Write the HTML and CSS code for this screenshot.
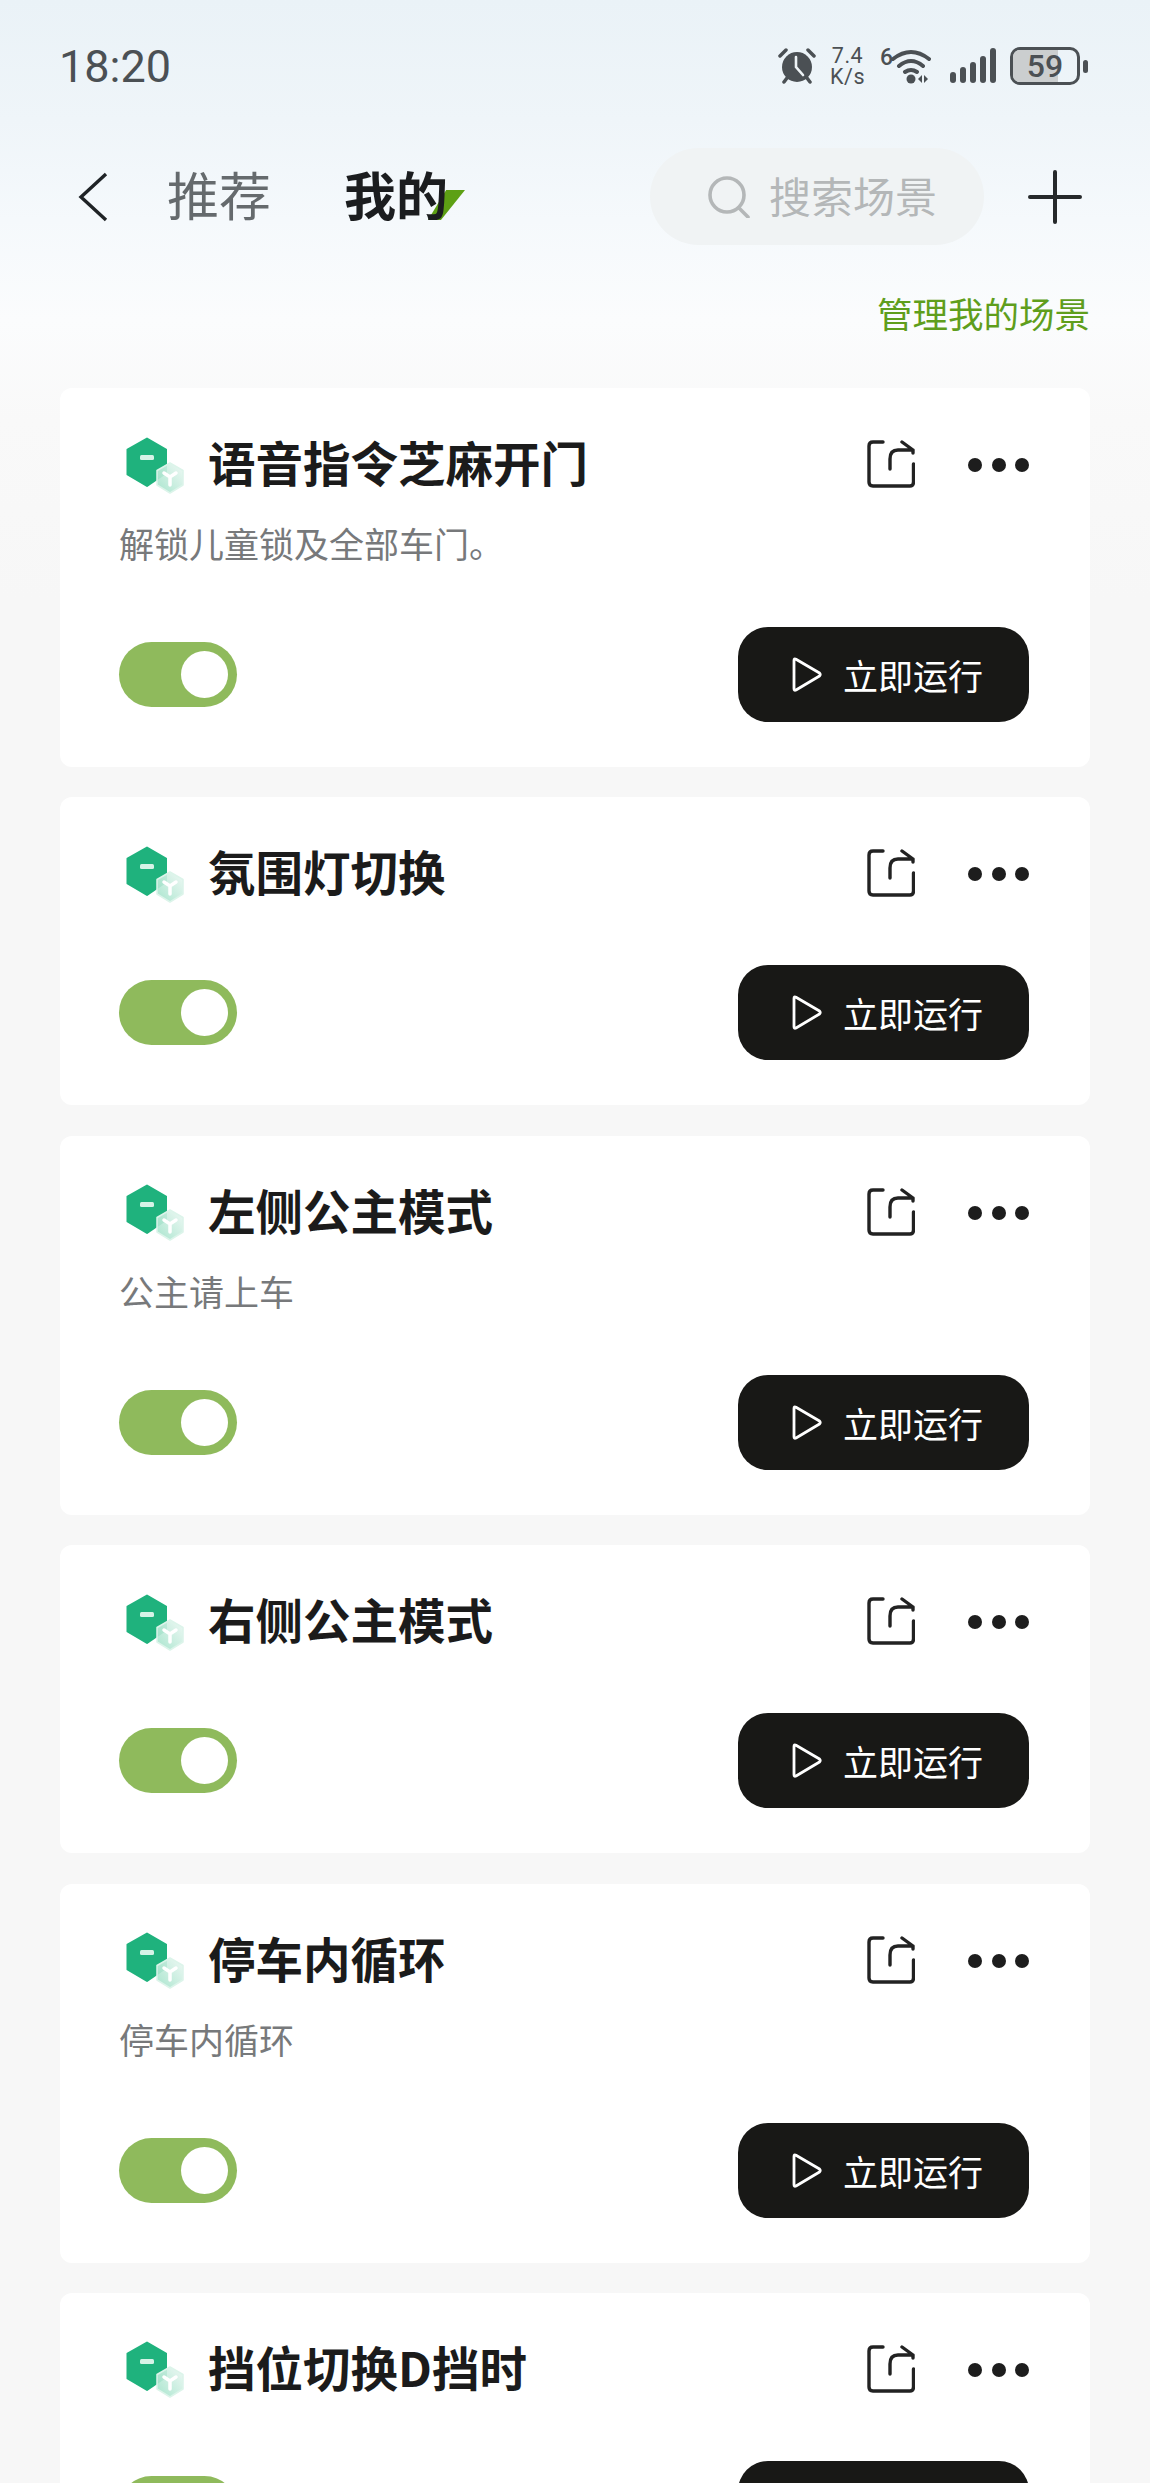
FILE: index.html
```html
<!DOCTYPE html>
<html lang="zh-CN">
<head>
  <meta charset="UTF-8" />
  <meta name="viewport" content="width=device-width, initial-scale=1.0"/>
  <title>我的场景</title>
  <link rel="stylesheet" href="styles.css">
</head>
<body>
  <svg class="defs" width="0" height="0">
    <defs>
      <linearGradient id="glass" x1="0" y1="1" x2="1" y2="0">
        <stop offset="0" stop-color="#9fe2c8"/>
        <stop offset="1" stop-color="#eef8f4"/>
      </linearGradient>
      <symbol id="scene" viewBox="0 0 70 60">
        <path d="M28 1.500 47 12.500V36L28 49 8.500 37.500V12.500Z" fill="#1fb27d" stroke="#1fb27d" stroke-width="2" stroke-linejoin="round"/>
        <rect x="21" y="18" width="14" height="5" rx="1.500" fill="#d6f3e7"/>
        <path d="M51 26 64 33.500V48L51 56 38 48V33.500Z" fill="url(#glass)" fill-opacity="0.9" stroke="#dcf4ea" stroke-width="1.500" stroke-linejoin="round"/>
        <path d="M45 36 51 40 57 36M51 40V48" fill="none" stroke="#fff" stroke-width="3.500" stroke-linecap="round"/>
      </symbol>
      <symbol id="share" viewBox="0 0 48 48">
        <path d="M16 2H6Q2 2 2 6V42Q2 46 6 46H43Q46.500 46 46.500 42V24" fill="none" stroke="#222" stroke-width="3.400" stroke-linecap="round"/>
        <path d="M23 29V19Q23 10 31 10H46V13M46 10 35 2" fill="none" stroke="#222" stroke-width="3.400" stroke-linecap="round" stroke-linejoin="round"/>
      </symbol>
      <symbol id="play" viewBox="0 0 30 35">
        <path d="M2 3.500Q2 1 4 2.200L27.500 16Q29 17.500 27.500 19L4 33Q2 34 2 31.500Z" fill="none" stroke="#fff" stroke-width="2.800" stroke-linejoin="round"/>
      </symbol>
    </defs>
  </svg>

  <div class="page">
    <div class="status-bar">
      <span class="time">18:20</span>
      <div class="status-icons">
        <svg class="alarm" width="38" height="36" viewBox="0 0 38 36">
          <circle cx="19" cy="19" r="15" fill="#4b5054"/>
          <path d="M18 9V19L25 27" fill="none" stroke="#eef3f6" stroke-width="2.600" stroke-linecap="round"/>
          <path d="M2 8 8 2M36 8 30 2M6 34 9 30M32 34 29 30" fill="none" stroke="#4b5054" stroke-width="3.500" stroke-linecap="round"/>
        </svg>
        <div class="speed"><span>7.4</span><span>K/s</span></div>
        <div class="wifi">
          <span class="wifi-six">6</span>
          <svg width="40" height="36" viewBox="0 0 40 36">
            <path d="M2 11Q20-3 38 11M8 18Q20 8 32 18M14 24Q20 20 26 24" fill="none" stroke="#4b5054" stroke-width="4" stroke-linecap="round"/>
            <circle cx="20" cy="31" r="4.500" fill="#4b5054"/>
            <path d="M27 31 31 27V35ZM37 31 33 27V35Z" fill="#4b5054"/>
          </svg>
        </div>
        <svg class="signal" width="46" height="36" viewBox="0 0 46 36">
          <rect x="0" y="24" width="6" height="11" rx="3" fill="#4b5054"/>
          <rect x="10" y="19" width="6" height="16" rx="3" fill="#4b5054"/>
          <rect x="20" y="14" width="6" height="21" rx="3" fill="#4b5054"/>
          <rect x="30" y="8" width="6" height="27" rx="3" fill="#4b5054"/>
          <rect x="40" y="0" width="6" height="35" rx="3" fill="#4b5054"/>
        </svg>
        <div class="battery">
          <div class="battery-body"><span class="battery-level"></span><span class="battery-num">59</span></div>
          <span class="battery-nub"></span>
        </div>
      </div>
    </div>

    <div class="nav">
      <svg class="back" width="30" height="50" viewBox="0 0 30 50">
        <path d="M28 2 3 25 28 48" fill="none" stroke="#1f2326" stroke-width="3.400"/>
      </svg>
      <span class="tab">推荐</span>
      <span class="tab tab-active">我的<i class="tab-mark"></i></span>
      <div class="search">
        <svg width="44" height="42" viewBox="0 0 44 42">
          <circle cx="20" cy="19" r="17" fill="none" stroke="#b4b7b8" stroke-width="3.600"/>
          <path d="M32 32 41 41" stroke="#b4b7b8" stroke-width="3.600" stroke-linecap="round"/>
        </svg>
        <span class="search-text">搜索场景</span>
      </div>
      <svg class="plus" width="54" height="54" viewBox="0 0 54 54">
        <path d="M27 2V52M2 27H52" stroke="#26292b" stroke-width="4" stroke-linecap="round"/>
      </svg>
    </div>

    <div class="manage"><a>管理我的场景</a></div>

    <div class="card-list">
      <div class="card">
        <div class="card-head">
          <svg class="scene" width="70" height="60"><use href="#scene"/></svg>
          <h3>语音指令芝麻开门</h3>
          <svg class="share" width="48" height="48"><use href="#share"/></svg>
          <div class="dots"><i></i><i></i><i></i></div>
        </div>
        <p class="desc">解锁儿童锁及全部车门。</p>
        <div class="card-foot card-foot-desc">
          <div class="toggle"><i></i></div>
          <button class="run"><svg width="30" height="35"><use href="#play"/></svg>立即运行</button>
        </div>
      </div>

      <div class="card">
        <div class="card-head">
          <svg class="scene" width="70" height="60"><use href="#scene"/></svg>
          <h3>氛围灯切换</h3>
          <svg class="share" width="48" height="48"><use href="#share"/></svg>
          <div class="dots"><i></i><i></i><i></i></div>
        </div>
        <div class="card-foot">
          <div class="toggle"><i></i></div>
          <button class="run"><svg width="30" height="35"><use href="#play"/></svg>立即运行</button>
        </div>
      </div>

      <div class="card">
        <div class="card-head">
          <svg class="scene" width="70" height="60"><use href="#scene"/></svg>
          <h3>左侧公主模式</h3>
          <svg class="share" width="48" height="48"><use href="#share"/></svg>
          <div class="dots"><i></i><i></i><i></i></div>
        </div>
        <p class="desc">公主请上车</p>
        <div class="card-foot card-foot-desc">
          <div class="toggle"><i></i></div>
          <button class="run"><svg width="30" height="35"><use href="#play"/></svg>立即运行</button>
        </div>
      </div>

      <div class="card">
        <div class="card-head">
          <svg class="scene" width="70" height="60"><use href="#scene"/></svg>
          <h3>右侧公主模式</h3>
          <svg class="share" width="48" height="48"><use href="#share"/></svg>
          <div class="dots"><i></i><i></i><i></i></div>
        </div>
        <div class="card-foot">
          <div class="toggle"><i></i></div>
          <button class="run"><svg width="30" height="35"><use href="#play"/></svg>立即运行</button>
        </div>
      </div>

      <div class="card">
        <div class="card-head">
          <svg class="scene" width="70" height="60"><use href="#scene"/></svg>
          <h3>停车内循环</h3>
          <svg class="share" width="48" height="48"><use href="#share"/></svg>
          <div class="dots"><i></i><i></i><i></i></div>
        </div>
        <p class="desc">停车内循环</p>
        <div class="card-foot card-foot-desc">
          <div class="toggle"><i></i></div>
          <button class="run"><svg width="30" height="35"><use href="#play"/></svg>立即运行</button>
        </div>
      </div>

      <div class="card">
        <div class="card-head">
          <svg class="scene" width="70" height="60"><use href="#scene"/></svg>
          <h3>挡位切换D挡时</h3>
          <svg class="share" width="48" height="48"><use href="#share"/></svg>
          <div class="dots"><i></i><i></i><i></i></div>
        </div>
        <div class="card-foot">
          <div class="toggle"><i></i></div>
          <!-- label falls below the fold here -->
          <button class="run"></button>
        </div>
      </div>
    </div>
  </div>
</body>
</html>
```

FILE: styles.css
```css
html, body {
  margin: 0;
  height: 2483px;
  overflow: hidden;
}
body {
  font-family: "Noto Sans CJK SC", "Noto Sans", sans-serif;
  background-color: #f7f7f7;
}
.defs {
  display: block;
  height: 0;
}
.page {
  height: 2483px;
  overflow: hidden;
  background: linear-gradient(180deg, #eaf2f7 0, #eff5f9 120px, #f5f9fc 220px, #fbfcfd 320px, #f9f9f9 420px, #f7f7f7 600px);
}

/* status bar */
.status-bar {
  display: flex;
  justify-content: space-between;
  align-items: center;
  box-sizing: border-box;
  height: 132px;
  padding: 24px 62px 24px 59px;
}
.time {
  font-family: Roboto, sans-serif;
  font-size: 45px;
  color: #4b5054;
}
.status-icons {
  display: flex;
  align-items: center;
  color: #4b5054;
}
.alarm {
  margin-right: -5px;
}
.speed {
  display: flex;
  flex-direction: column;
  align-items: center;
  margin-left: 19px;
  font-family: Roboto, sans-serif;
  font-size: 21.500px;
  line-height: 21.500px;
  letter-spacing: 0.500px;
}
.wifi {
  display: flex;
  align-items: flex-start;
  margin-left: 15px;
}
.wifi-six {
  font-family: Roboto, sans-serif;
  font-weight: 500;
  font-size: 23px;
  line-height: 20px;
  width: 11px;
}
.signal {
  margin-left: 19px;
}
.battery {
  display: flex;
  align-items: center;
  margin-left: 14px;
}
.battery-body {
  position: relative;
  display: flex;
  justify-content: center;
  align-items: center;
  box-sizing: border-box;
  width: 70px;
  height: 38px;
  border: 3px solid #4b5054;
  border-radius: 10px;
  overflow: hidden;
}
.battery-level {
  position: absolute;
  left: 0;
  top: 0;
  bottom: 0;
  width: 70%;
  background-color: #cbcecf;
}
.battery-num {
  position: relative;
  font-family: Roboto, sans-serif;
  font-weight: 500;
  font-size: 32px;
  line-height: 32px;
}
.battery-nub {
  width: 5px;
  height: 13px;
  margin-left: 3px;
  border-radius: 3px;
  background-color: #4b5054;
}

/* nav row */
.nav {
  display: flex;
  align-items: center;
  height: 97px;
  margin-top: 16px;
  padding: 0 68px 0 78px;
}
.back {
  margin-right: 59px;
}
.tab {
  padding-bottom: 5px;
  font-size: 52px;
  line-height: 60px;
  color: #656a6d;
}
.tab-active {
  position: relative;
  isolation: isolate;
  margin-left: 73px;
  font-weight: 700;
  color: #1b1d1f;
}
.tab-mark {
  position: absolute;
  z-index: -1;
  left: 84px;
  top: 26px;
  width: 37px;
  height: 30px;
  background-color: #5da014;
  clip-path: polygon(0 100%, 49% 0, 100% 0, 35% 100%);
}
.search {
  display: flex;
  align-items: center;
  gap: 18px;
  box-sizing: border-box;
  width: 334px;
  height: 97px;
  margin-left: auto;
  padding-left: 57px;
  border-radius: 49px;
  background-color: #f0f3f4;
  font-size: 42px;
  color: #b4b7b8;
}
.search-text {
  padding-bottom: 5px;
}
.plus {
  margin-left: 44px;
}
.manage {
  display: flex;
  justify-content: flex-end;
  margin-top: 43px;
  padding-right: 60px;
  font-size: 35.500px;
  line-height: 50px;
  color: #5f9e1c;
}

/* scene cards */
.card-list {
  display: flex;
  flex-direction: column;
  gap: 30.400px;
  margin: 50px 60px 0;
}
.card {
  flex-shrink: 0;
  box-sizing: border-box;
  padding: 40px 61px 45px 59px;
  border-radius: 12px;
  background-color: #fff;
}
.card-head {
  display: flex;
  align-items: center;
  height: 72px;
}
.scene {
  flex-shrink: 0;
  margin-top: 5px;
}
.card-head h3 {
  flex: 1;
  margin: 0 0 0 19px;
  padding-bottom: 4px;
  font-size: 47.500px;
  line-height: 68px;
  font-weight: 700;
  color: #1b1b1b;
}
.share {
  margin-right: 53px;
}
.dots {
  display: flex;
  gap: 9.500px;
  margin-top: 2px;
}
.dots i {
  width: 14px;
  height: 14px;
  border-radius: 50%;
  background-color: #1d1d1d;
}
.desc {
  margin: 21px 0 0;
  font-size: 35px;
  line-height: 44px;
  color: #77797b;
}
.card-foot {
  display: flex;
  justify-content: space-between;
  align-items: center;
  margin-top: 56px;
}
.card-foot-desc {
  margin-top: 62px;
}
.toggle {
  display: flex;
  justify-content: flex-end;
  align-items: center;
  box-sizing: border-box;
  width: 118px;
  height: 65px;
  padding-right: 9px;
  border-radius: 33px;
  background-color: #8fba5c;
}
.toggle i {
  width: 47px;
  height: 47px;
  border-radius: 50%;
  background-color: #fff;
}
.run {
  display: flex;
  align-items: center;
  gap: 21px;
  box-sizing: border-box;
  width: 291px;
  height: 95px;
  padding: 0 0 0 54px;
  border: 0;
  border-radius: 30px;
  background-color: #181816;
  font-family: inherit;
  font-size: 35px;
  color: #fff;
}
```
